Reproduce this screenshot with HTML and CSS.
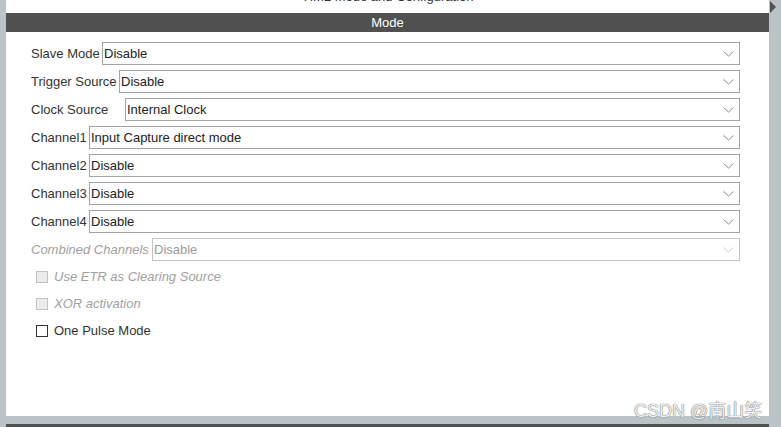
FILE: index.html
```html
<!DOCTYPE html>
<html>
<head>
<meta charset="utf-8">
<link rel="stylesheet" href="styles.css">
</head>
<body>
<div class="frame">
  <div class="strip-left"></div>
  <div class="main">
    <div class="title"><div class="title-text">TIM2 Mode and Configuration</div></div>
    <div class="bar">Mode</div>
    <div class="content">
      <div class="row"><span class="lbl w-slave">Slave Mode</span><div class="sel"><span>Disable</span><svg class="chev" width="11" height="6" viewBox="0 0 11 6"><path d="M0.5 0.5 L5.5 5 L10.5 0.5" fill="none" stroke="#8a8a8a" stroke-width="1"/></svg></div></div>
      <div class="row"><span class="lbl w-trigger">Trigger Source</span><div class="sel"><span>Disable</span><svg class="chev" width="11" height="6" viewBox="0 0 11 6"><path d="M0.5 0.5 L5.5 5 L10.5 0.5" fill="none" stroke="#8a8a8a" stroke-width="1"/></svg></div></div>
      <div class="row"><span class="lbl w-clock">Clock Source</span><div class="sel"><span>Internal Clock</span><svg class="chev" width="11" height="6" viewBox="0 0 11 6"><path d="M0.5 0.5 L5.5 5 L10.5 0.5" fill="none" stroke="#8a8a8a" stroke-width="1"/></svg></div></div>
      <div class="row"><span class="lbl w-ch">Channel1</span><div class="sel"><span>Input Capture direct mode</span><svg class="chev" width="11" height="6" viewBox="0 0 11 6"><path d="M0.5 0.5 L5.5 5 L10.5 0.5" fill="none" stroke="#8a8a8a" stroke-width="1"/></svg></div></div>
      <div class="row"><span class="lbl w-ch">Channel2</span><div class="sel"><span>Disable</span><svg class="chev" width="11" height="6" viewBox="0 0 11 6"><path d="M0.5 0.5 L5.5 5 L10.5 0.5" fill="none" stroke="#8a8a8a" stroke-width="1"/></svg></div></div>
      <div class="row"><span class="lbl w-ch">Channel3</span><div class="sel"><span>Disable</span><svg class="chev" width="11" height="6" viewBox="0 0 11 6"><path d="M0.5 0.5 L5.5 5 L10.5 0.5" fill="none" stroke="#8a8a8a" stroke-width="1"/></svg></div></div>
      <div class="row"><span class="lbl w-ch">Channel4</span><div class="sel"><span>Disable</span><svg class="chev" width="11" height="6" viewBox="0 0 11 6"><path d="M0.5 0.5 L5.5 5 L10.5 0.5" fill="none" stroke="#8a8a8a" stroke-width="1"/></svg></div></div>
      <div class="row"><span class="lbl w-comb lbl-disabled">Combined Channels</span><div class="sel sel-disabled"><span>Disable</span><svg class="chev" width="11" height="6" viewBox="0 0 11 6"><path d="M0.5 0.5 L5.5 5 L10.5 0.5" fill="none" stroke="#cfcfcf" stroke-width="1"/></svg></div></div>
      <div class="checks">
        <div class="chk-row"><span class="box box-disabled"></span><span class="chk-lbl lbl-disabled">Use ETR as Clearing Source</span></div>
        <div class="chk-row"><span class="box box-disabled"></span><span class="chk-lbl lbl-disabled">XOR activation</span></div>
        <div class="chk-row"><span class="box"></span><span class="chk-lbl">One Pulse Mode</span></div>
      </div>
    </div>
    <div class="bottom-gray"></div>
    <div class="bottom-dark"></div>
  </div>
  <div class="strip-right"><span class="tri"></span></div>
  <div class="watermark">CSDN @南山笑</div>
</div>
</body>
</html>
```
FILE: styles.css
```css
* { box-sizing: border-box; }
html, body { margin: 0; padding: 0; }
body {
  font-family: "Liberation Sans", Arial, sans-serif;
  font-size: 13px;
  color: #222;
  background: #fff;
}
.frame {
  position: relative;
  display: flex;
  width: 781px;
  height: 427px;
  overflow: hidden;
}
.strip-left {
  width: 6px;
  background: #b9c3c8;
}
.strip-right {
  width: 12px;
  background: #b9c3c8;
  padding-top: 1px;
  padding-left: 1px;
}
.tri {
  display: block;
  width: 0;
  height: 0;
  border-top: 6px solid transparent;
  border-bottom: 6px solid transparent;
  border-left: 6px solid #505150;
}
.main {
  width: 763px;
  display: flex;
  flex-direction: column;
}
.title {
  height: 13px;
  overflow: hidden;
}
.title-text {
  margin-top: -11px;
  line-height: 15px;
  text-align: center;
  color: #333;
  font-size: 13px;
}
.bar {
  height: 19px;
  background: #4f504f;
  color: #fff;
  text-align: center;
  line-height: 19px;
  font-size: 13px;
}
.content {
  flex: 1;
  background: #fff;
  padding: 10px 29px 0 25px;
  display: flex;
  flex-direction: column;
  gap: 5px;
}
.row {
  display: flex;
  align-items: center;
  height: 23px;
}
.lbl {
  flex: none;
  white-space: nowrap;
  color: #333;
}
.w-slave { width: 71px; }
.w-trigger { width: 88px; }
.w-clock { width: 94px; }
.w-ch { width: 58px; }
.w-comb { width: 121px; }
.sel {
  flex: 1;
  height: 23px;
  border: 1px solid #a3a3a3;
  display: flex;
  align-items: center;
  justify-content: space-between;
  padding: 0 5px 0 1px;
  color: #222;
}
.sel-disabled {
  border-color: #c4c4c4;
  color: #9a9a9a;
}
.chev { flex: none; margin-top: 1px; }
.checks {
  display: flex;
  flex-direction: column;
  gap: 14px;
  padding-top: 4px;
  padding-left: 5px;
}
.chk-row {
  display: flex;
  align-items: center;
  height: 13px;
  gap: 6px;
}
.box {
  width: 12px;
  height: 12px;
  border: 1px solid #333;
  background: #fff;
  flex: none;
}
.box-disabled {
  border-color: #c2c2c2;
  background: #ececec;
}
.chk-lbl { color: #333; }
.lbl-disabled { color: #a0a0a0; font-style: italic; }
.bottom-gray {
  height: 8px;
  background: #b9c3c8;
}
.bottom-dark {
  height: 3px;
  background: #4f504f;
}
.watermark {
  position: absolute;
  left: 634px;
  top: 396px;
  font-family: "Liberation Sans", "Noto Sans CJK SC", sans-serif;
  font-size: 18px;
  color: #f0f0f0;
  text-shadow: 0 0 1px #666, 0 0 1px #777;
  white-space: nowrap;
}
```
